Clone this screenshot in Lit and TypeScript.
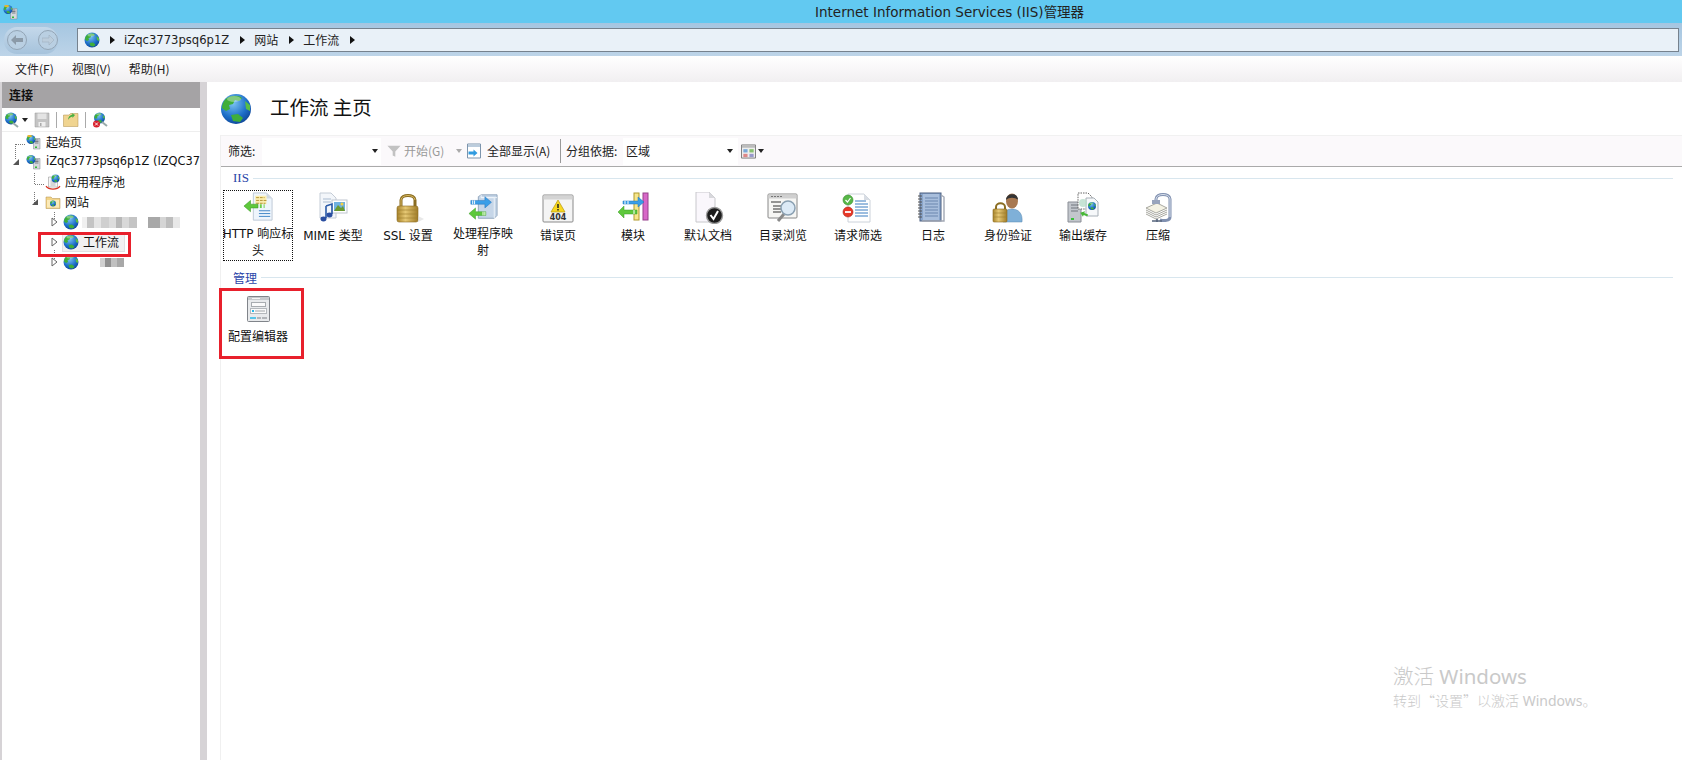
import { LitElement, html, css, svg } from "lit";
import { customElement } from "lit/decorators.js";

const globe = (cx: number, cy: number, r: number) => {
  const s = r / 15;
  return svg`<g transform="translate(${cx} ${cy}) scale(${s})">
    <circle r="15" fill="url(#gb)"/>
    <path d="M-9-11C-4-14 3-14 6-11L3-8-1-9-3-5-7-4-6 0-10 2-14-1C-14-5-12-9-9-11Z" fill="#3fae3a"/>
    <path d="M-5 6 2 5 7 9 4 13-3 12Z" fill="#3fae3a"/>
    <path d="M9-8 14-4 14 2 10 0Z" fill="#58bd45"/>
    <ellipse cx="-2" cy="-10" rx="7" ry="3" fill="#fff" opacity=".35"/>
  </g>`;
};

const S = (v: number, body: unknown) =>
  html`<svg width=${v} height=${v} viewBox="0 0 32 32">${body}</svg>`;

const srv = svg`<path d="M15 9h13v21H15z" fill="#d5d8dc" stroke="#7e848c"/><path d="M18 12h7M18 15h7M18 18h7" stroke="#59606a" stroke-width="1.5"/><rect x="18" y="25" width="4" height="3" fill="#38b838"/>`;

const big: Record<string, unknown> = {
  http: svg`<path d="M11 1h14l6 6v23H11z" fill="#eef5fc" stroke="#bcc8d4"/><path d="M25 1v6h6z" fill="#cfd8e2"/>
    <rect x="13" y="4" width="12" height="9" fill="#fbeeb0"/><path d="M14 6h9M14 9h12M14 12h10" stroke="#b09030" stroke-dasharray="3 1"/>
    <path d="M17 20h12M17 23h12M17 26h12" stroke="#3b82c4"/>
    <path d="M1 15 8 9v4h8v4H8v4z" fill="#5ec83c" stroke="#3a9a28" stroke-width=".6"/><path d="M18 13h2v4h-2zM22 13h1v4h-1z" fill="#6fce48"/>`,
  mime: svg`<path d="M3 1h11l5 5v20H3z" fill="#f3f6fa" stroke="#c4ccd6"/><path d="M6 7h8M6 10h8" stroke="#a9bbd0"/>
    <rect x="15" y="8" width="15" height="13" fill="#fff" stroke="#bfc6cf"/><rect x="17" y="10" width="11" height="9" fill="#6fb0e0"/><path d="M17 19l4-6 3 3 2-2 2 5z" fill="#6a9a30"/><circle cx="25" cy="12" r="1.5" fill="#f4d040"/>
    <path d="M9 14v12M9 14l6-2v10" stroke="#2a5aa8" stroke-width="1.6" fill="none"/><ellipse cx="6.5" cy="27" rx="3" ry="2.4" fill="#2a4ea0"/><ellipse cx="12.5" cy="23" rx="3" ry="2.4" fill="#2a4ea0"/>`,
  ssl: svg`<path d="M9 15V8C9 2 23 2 23 8v7" fill="none" stroke="#8a6d22" stroke-width="3"/><path d="M9 15V8C9 2 23 2 23 8" fill="none" stroke="#d8b860" stroke-width="1"/>
    <rect x="5" y="14" width="21" height="16" rx="2" fill="url(#gold)" stroke="#8a6a20" stroke-width=".6"/><path d="M5 18h21M5 22h21M5 26h21" stroke="#9c7c2c" opacity=".6"/><path d="M26 24l6 3-6 3z" fill="#d8d8d8" opacity=".6"/>`,
  handler: svg`<path d="M11 5l3-2h17v22l-3 3H11z" fill="#c6d6e8" stroke="#8fa4bc"/><path d="M14 3v3h17M14 6h14v22" fill="none" stroke="#eef4fa"/>
    <path d="M3 9h15V5l7 6-7 6v-4H3z" fill="#3a9ee8" stroke="#2270b8" stroke-width=".5"/><path d="M5 9v4M7 9v4" stroke="#fff"/>
    <path d="M1 23l7-6v4h11v4H8v4z" fill="#5ec83c" stroke="#3a9a28" stroke-width=".5"/><path d="M16 21v4M18 21v4" stroke="#fff"/>`,
  e404: svg`<rect x="1" y="3" width="30" height="27" rx="1" fill="#f4f4f4" stroke="#8a8a8a"/><path d="M1.5 3.5h29v4h-29z" fill="#d4d4d4"/>
    <path d="M16 8l7 12H9z" fill="#f8d820" stroke="#b89810" stroke-width=".7"/><path d="M16 12v4M16 17v1.5" stroke="#222" stroke-width="1.5"/>
    <text x="16" y="28" font-family="DejaVu Sans" font-size="8" font-weight="700" text-anchor="middle" fill="#333">404</text>`,
  module: svg`<rect x="17" y="1" width="5" height="27" fill="#f6e68c" stroke="#b09a2c"/><rect x="26" y="1" width="5" height="27" fill="#d868c8" stroke="#96408c"/>
    <path d="M6 9h15V5l6 5-6 5v-3H6z" fill="#3a9ee8" stroke="#2270b8" stroke-width=".5"/><path d="M8 9v3M11 9v3" stroke="#fff"/>
    <path d="M1 20l6-6v4h13v4H7v4z" fill="#5ec83c" stroke="#3a9a28" stroke-width=".5"/><path d="M17 18v4" stroke="#fff"/>`,
  defdoc: svg`<path d="M4 0h13l6 6v24H4z" fill="#faf7fc" stroke="#c8c8cc"/><path d="M17 0v6h6z" fill="#d8d8dc"/>
    <circle cx="22.5" cy="23.5" r="8" fill="#1c1c1c" stroke="#9a9a9a" stroke-width="1.4"/><path d="M18.5 23l3 4 4.5-8" stroke="#fff" stroke-width="2" fill="none"/>`,
  dir: svg`<rect x="1" y="2" width="29" height="24" rx="1" fill="#f6f6f4" stroke="#888"/><path d="M1.5 2.5h28v4h-28z" fill="#d0d0d0"/><path d="M4 4.5h12" stroke="#777" stroke-dasharray="2 1"/>
    <path d="M4 10h10M6 14h8M6 17h8M6 20h8" stroke="#333"/>
    <path d="M17 22 11 29" stroke="#8a8a8a" stroke-width="3"/><circle cx="21" cy="16" r="7" fill="#dceaf6" stroke="#8aa0b2" stroke-width="1.5"/>`,
  req: svg`<path d="M6 2h16l6 6v22H6z" fill="#fff" stroke="#ccd2da"/><path d="M22 2v6h6z" fill="#d8dde4"/>
    <path d="M13 9h11M13 12h13M13 15h13M13 18h13M13 21h13M13 24h13" stroke="#3a7cc0"/>
    <circle cx="6" cy="8" r="5" fill="#58b848" stroke="#3a8a30" stroke-width=".6"/><path d="M3.5 8l2 2 3-4" stroke="#fff" fill="none" stroke-width="1.2"/>
    <circle cx="6" cy="20" r="5" fill="#e83828" stroke="#aa2418" stroke-width=".6"/><path d="M3 20h6" stroke="#fff" stroke-width="1.8"/>`,
  log: svg`<rect x="3" y="1" width="21" height="28" fill="#8aa6cc" stroke="#4a5e80"/><rect x="6" y="2" width="16" height="26" fill="#a8bedc"/><path d="M8 6h13M8 9h13M8 12h13M8 15h13M8 18h13M8 21h13M8 24h13" stroke="#6a86ae"/>
    <path d="M1 4h4M1 7h4M1 10h4M1 13h4M1 16h4M1 19h4M1 22h4M1 25h4" stroke="#555"/><path d="M24 3l3 2v24H5" fill="none" stroke="#a2a8b4" stroke-width="1.4"/>`,
  auth: svg`<path d="M11 30c-1-9 3-13 9-13s11 4 10 13z" fill="#7fb0d8" stroke="#5a88b0" stroke-width=".5"/><ellipse cx="20" cy="9" rx="6" ry="7.5" fill="#a87850"/><path d="M14 8c0-7 12-8 12 0-3-3-9-3-12 0z" fill="#333"/>
    <path d="M4 18v-3c0-5 9-5 9 0v3" fill="none" stroke="#8a6d22" stroke-width="2"/><rect x="1" y="17" width="14" height="13" rx="1" fill="url(#gold)" stroke="#8a6a20" stroke-width=".6"/><path d="M1 21h14M1 25h14" stroke="#9c7c2c" opacity=".6"/>`,
  output: svg`<path d="M1 10h13v20H1z" fill="#c2c6cc" stroke="#8a8e96"/><path d="M4 13h7M4 16h7M4 19h7" stroke="#70767e"/><rect x="4" y="26" width="3" height="2" fill="#38c038"/>
    <path d="M11 1h10l4 4v12H11z" fill="#fff" stroke="#666" stroke-dasharray="1.5 1"/><path d="M19 6h8l4 4v14H19z" fill="#f6f8fa" stroke="#a8b0b8"/>
    <circle cx="16" cy="11" r="4" fill="#b9dccb" opacity=".8"/>${globe(25, 14, 4)}<path d="M13 22l4-3v2h4v2h-4v2z" fill="#48b838" transform="rotate(20 17 22)"/>`,
  compress: svg`<path d="M4 16l11-5 10 5-11 5z" fill="#f4f2e4" stroke="#a8a8a0"/><path d="M4 18l10 5 11-5M4 20l10 5 11-5M4 22l10 5 11-5" fill="none" stroke="#a8a8a0"/>
    <path d="M14 11V7c0-6 14-6 14 0v18c0 4-6 4-10 3" fill="none" stroke="#8090b0" stroke-width="3"/><path d="M14 11V7c0-6 14-6 14 0v18" fill="none" stroke="#d8e0ec"/>
    <path d="M10 29h10M15 27v3" stroke="#56647c" stroke-width="1.6"/><rect x="10" y="8" width="8" height="4" fill="#98a4bc"/>`,
  config: svg`<rect x="5.500" y="3.500" width="22" height="25" rx="1" fill="#e8eaec" stroke="#80848a"/><path d="M6 4h21v3H6z" fill="#c6c8cc"/><path d="M10 5.500h8" stroke="#f4f4f4"/>
    <rect x="9.500" y="9.500" width="14" height="4" fill="#fafafa" stroke="#a8acb0"/><rect x="8.500" y="15.500" width="16" height="5" fill="#fafafa" stroke="#b4b8bc"/><rect x="10" y="17" width="2" height="2" fill="#28b8e8"/><path d="M13 18h10" stroke="#a0a4a8"/>
    <path d="M8 25h6" stroke="#28b8e8" stroke-width="1.5"/><path d="M15 25h4M20 25h5" stroke="#a0a4a8" stroke-width="1.5"/>`,
};

const small: Record<string, unknown> = {
  home: svg`${srv}${globe(10, 11, 9)}<path d="M3 2h8v4H3z" fill="#f0b428" opacity=".9"/>`,
  server: svg`${srv}${globe(10, 11, 9)}`,
  pool: svg`<path d="M7 6h18v20H7z" fill="#f6f6f6" stroke="#888"/><path d="M11 14h10M11 18h10M11 22h10" stroke="#777"/>${globe(21, 9, 8)}<path d="M2 24c6 8 22 8 28 0" fill="none" stroke="#d83020" stroke-width="2.500"/>`,
  sites: svg`<path d="M2 6h10l3 3h15v20H2z" fill="#f2d488" stroke="#b08e48"/><path d="M4 12h24v15H4z" fill="#fbeab8"/>${globe(16, 19, 6)}`,
  site: svg`${globe(16, 16, 15)}`,
};

const items: [string, string][] = [
  ["http", "HTTP 响应标\n头"], ["mime", "MIME 类型"], ["ssl", "SSL 设置"], ["handler", "处理程序映\n射"],
  ["e404", "错误页"], ["module", "模块"], ["defdoc", "默认文档"], ["dir", "目录浏览"], ["req", "请求筛选"],
  ["log", "日志"], ["auth", "身份验证"], ["output", "输出缓存"], ["compress", "压缩"],
];

type Row = { ind: number; exp?: "open" | "closed"; icon: string; text?: string; blur?: [number, string][]; h?: number; gap?: number; sel?: boolean };
const rows: Row[] = [
  { ind: 24, icon: "home", text: "起始页" },
  { ind: 11, exp: "open", icon: "server", text: "iZqc3773psq6p1Z (IZQC37" },
  { ind: 43, icon: "pool", text: "应用程序池" },
  { ind: 30, exp: "open", icon: "sites", text: "网站" },
  { ind: 50, exp: "closed", icon: "site", gap: 3, h: 11, blur: [[5, "#f0f0f0"], [7, "#c4c4c4"], [7, "#e4e4e4"], [8, "#cfcfcf"], [7, "#dcdcdc"], [6, "#b8b8b8"], [7, "#d8d8d8"], [8, "#c4c4c4"], [11, "#fff"], [12, "#a8a8a8"], [6, "#d5d5d5"], [7, "#bdbdbd"], [7, "#e8e8e8"]] },
  { ind: 50, exp: "closed", icon: "site", text: "工作流", sel: true },
  { ind: 50, exp: "closed", icon: "site", gap: 21, h: 9, blur: [[5, "#d0d0d0"], [6, "#909090"], [6, "#c0c0c0"], [7, "#a8a8a8"]] },
];

const drop = html`<svg class="drop" width="6" height="4" viewBox="0 0 6 4"><path d="M0 0h6L3 4z" fill="#222"/></svg>`;
const gdrop = html`<svg class="drop" width="6" height="4" viewBox="0 0 6 4"><path d="M0 0h6L3 4z" fill="#aaa"/></svg>`;
const crumb = html`<svg class="crumb" width="5" height="8" viewBox="0 0 5 8"><path d="M0 0l5 4-5 4z" fill="#111"/></svg>`;

@customElement("app-root")
export class AppRoot extends LitElement {
  static styles = css`
    :host { display: flex; flex-direction: column; width: 1682px; height: 760px; overflow: hidden; position: relative; background: #fff; color: #111;
      font: 12px "DejaVu Sans", "Noto Sans CJK SC", sans-serif; }
    .defs { width: 0; height: 0; position: absolute; }
    .cn { font-family: "Noto Sans CJK SC", sans-serif; }
    .title { height: 23px; background: #62c9f1; display: flex; align-items: center; flex: none; padding-left: 3px; }
    .title .t { margin-left: 796px; font-size: 13.5px; color: #222; white-space: nowrap; padding-bottom: 2px; }
    .addr { height: 33px; flex: none; display: flex; align-items: center; background: linear-gradient(#a5c6e1, #bdd4e8); padding-left: 4px; }
    .nav { width: 54px; height: 27px; border-radius: 13px; background: linear-gradient(#c4d8ea, #a6c3dc); display: flex; align-items: center; justify-content: space-between; padding: 0 0 0 3px; box-sizing: border-box; margin-top: 1px; }
    .nav span { width: 20px; height: 20px; border-radius: 50%; border: 1px solid #93a5b6; box-sizing: border-box; background: #b9cfe2; display: flex; align-items: center; justify-content: center; }
    .box { margin-left: 19px; flex: 1; height: 24px; background: #e9f1f8; border: 1px solid #76828e; margin-right: 3px; display: flex; align-items: center; padding-left: 6px; box-sizing: border-box; }
    .box .crumb { margin: 0 9px 0 11px; flex: none; }
    .box .crumb.first { margin-left: 10px; }
    .box b { font-weight: 400; color: #222; font-size: 11.6px; }
    .box b.cn { font-size: 12px; }
    .menu { height: 26px; flex: none; display: flex; align-items: center; background: linear-gradient(#fff, #f1eff1); gap: 18px; padding: 0 0 2px 15px; box-sizing: border-box; color: #222; font-family: "Noto Sans CJK SC", sans-serif; }
    .main { flex: 1; display: flex; background: #d6d3d6; min-height: 0; }
    .left { width: 198px; margin-left: 2px; background: #fff; flex: none; display: flex; flex-direction: column; overflow: hidden; }
    .lh { height: 26px; background: #a5a3a5; font-weight: 700; display: flex; align-items: center; padding: 0 0 2px 7px; box-sizing: border-box; flex: none; color: #111; }
    .ltb { height: 24px; flex: none; display: flex; align-items: center; padding-left: 2px; border-bottom: 1px solid #eee; box-sizing: border-box; }
    .ltb .sep { width: 1px; height: 16px; background: #aaa; margin: 0 6px; }
    .ltb .drop { margin: 0 6px 0 2px; }
    .tree { position: relative; }
    .row { height: 20px; display: flex; align-items: center; white-space: nowrap; position: relative; }
    .row .exp { width: 8px; flex: none; }
    .row .ic { flex: none; display: flex; }
    .row .tx { margin-left: 4px; color: #111; padding-bottom: 2px; font-size: 11.4px; }
    .row .tx.cn { font-size: 12px; }
    .row.sel .pill { display: flex; align-items: center; background: #f1f0f1; border: 1px solid #e2e0e2; height: 19px; padding-right: 5px; margin-left: -1px; box-sizing: border-box; }
    .mosaic { display: flex; align-items: stretch; }
    .lines { position: absolute; left: 0; top: 0; pointer-events: none; }
    .right { flex: 1; margin-left: 7px; background: #fff; display: flex; flex-direction: column; min-width: 0; }
    .hdr { height: 53px; flex: none; display: flex; align-items: center; padding-left: 13px; box-sizing: border-box; }
    .hdr h1 { margin: 0 0 0 18px; padding-bottom: 4px; font-weight: 400; font-size: 19.500px; color: #111; font-family: "Noto Sans CJK SC", sans-serif; }
    .body { flex: 1; margin-left: 13px; border-left: 1px solid #f0f0f0; display: flex; flex-direction: column; }
    .bar { height: 32px; flex: none; background: #fbf9fb; border-top: 1px solid #f1f1f1; border-bottom: 1px solid #aaa; box-sizing: border-box; display: flex; align-items: center; color: #222; }
    .bar > * { flex: none; }
    .bar .cn { padding-bottom: 1px; }
    .input { height: 27px; background: #fff; display: flex; align-items: center; justify-content: space-between; box-sizing: border-box; padding-right: 3px; }
    .grayt { color: #999; }
    .vs { width: 1px; height: 24px; background: #999; }
    .fl { width: 34px; margin-left: 7px; }
    .fi { width: 119px; justify-content: flex-end; }
    .ib { display: flex; }
    .ib6 { margin-left: 6px; }
    .ib2 { margin-left: 2px; }
    .ib4 { margin-left: 4px; }
    .ib3 { margin-left: 3px; }
    .go { margin-left: 3px; width: 52px; }
    .all { margin-left: 5px; width: 73px; }
    .grp { margin-left: 5px; width: 57px; }
    .gi { width: 115px; padding: 0 5px 0 3px; }
    .sec { display: flex; align-items: center; height: 20px; padding-right: 9px; margin-left: 12px; font-size: 12px; color: #2a45a8; gap: 4px; flex: none; }
    .sec i { flex: 1; height: 1px; background: #d8e6ee; }
    .serif { font-family: "Liberation Serif", serif; font-size: 13px; }
    .grid { display: flex; gap: 5px; padding-left: 2px; flex: none; }
    .item { width: 70px; height: 71px; box-sizing: border-box; border: 1px dotted transparent; padding-top: 1px; display: flex; flex-direction: column; align-items: center; }
    .item.focus { border-color: #111; }
    .item .lb { margin-top: 4px; line-height: 17px; white-space: pre; text-align: center; color: #111; }
    .s1 { margin-top: 1px; }
    .g1 { margin-top: 2px; }
    .s2 { margin-top: 6px; }
    .g2 { margin-top: 4px; }
    .mark { position: absolute; border: 3px solid #e8202c; box-sizing: border-box; pointer-events: none; }
    .m1 { left: 38px; top: 232px; width: 93px; height: 25px; }
    .m2 { left: 219px; top: 288px; width: 85px; height: 71px; }
    .wm { position: absolute; left: 1393px; top: 662px; color: #c9c9c9; font-family: "Noto Sans", "Noto Sans CJK SC", sans-serif; pointer-events: none; white-space: nowrap; }
    .wm .a { font-size: 20.500px; line-height: 27px; }
    .wm .b { font-size: 14px; line-height: 20px; }
    .wm .cn { font-family: "Noto Sans CJK SC", sans-serif; font-weight: 300; }
  `;

  render() {
    return html`
      <svg class="defs"><defs>
        <radialGradient id="gb" cx=".4" cy=".3" r=".8"><stop offset="0" stop-color="#7cc4f2"/><stop offset=".6" stop-color="#1c6ec8"/><stop offset="1" stop-color="#0c3c8c"/></radialGradient>
        <linearGradient id="gold" x1="0" x2="1"><stop offset="0" stop-color="#a8842c"/><stop offset=".4" stop-color="#e6c874"/><stop offset="1" stop-color="#a07c28"/></linearGradient>
      </defs></svg>
      <div class="title">
        ${S(16, small.home)}
        <span class="t">Internet Information Services (IIS)<span class="cn">管理器</span></span>
      </div>
      <div class="addr">
        <div class="nav">
          <span><svg width="12" height="10" viewBox="0 0 12 10"><path d="M5 0 0 5l5 5V7h7V3H5z" fill="#8b9aa8"/></svg></span>
          <span><svg width="12" height="10" viewBox="0 0 12 10"><path d="M7 0l5 5-5 5V7H0V3h7z" fill="#bccddc" stroke="#9fb0c0" stroke-width=".6"/></svg></span>
        </div>
        <div class="box">
          ${S(16, small.site)}
          <svg class="crumb first" width="5" height="8" viewBox="0 0 5 8"><path d="M0 0l5 4-5 4z" fill="#111"/></svg>
          <b>iZqc3773psq6p1Z</b>${crumb}<b class="cn">网站</b>${crumb}<b class="cn">工作流</b>${crumb}
        </div>
      </div>
      <div class="menu"><span>文件(F)</span><span>视图(V)</span><span>帮助(H)</span></div>
      <div class="main">
        <div class="left">
          <div class="lh cn">连接</div>
          <div class="ltb">
            ${S(16, svg`${globe(14, 13, 12)}<path d="M18 22l10 8" stroke="#9aa" stroke-width="4"/>`)}${drop}
            ${S(16, svg`<path d="M2 2h28v28H2z" fill="#c4c4c4" stroke="#999"/><path d="M7 3h18v11H7z" fill="#e4e4e4"/><path d="M9 20h14v9H9z" fill="#eee"/><path d="M12 22h3v6h-3z" fill="#aaa"/>`)}
            <span class="sep"></span>
            ${S(16, svg`<path d="M1 6h11l3-3h15v26H1z" fill="#f0d490" stroke="#b08e48"/><path d="M10 16c0-6 4-10 9-11l-2-3 7 4-5 6v-3c-4 1-7 3-9 7z" fill="#48b040"/>`)}
            <span class="sep"></span>
            ${S(16, svg`${globe(15, 12, 11)}<path d="M20 20l10 8" stroke="#9aa" stroke-width="4"/><circle cx="9" cy="24" r="7" fill="#d8202c"/><path d="M6 21l6 6M12 21l-6 6" stroke="#fff" stroke-width="1.8"/>`)}
          </div>
          <div class="tree">
            <svg class="lines" width="198" height="145"><path d="M13.500 12V27M14 12.500H24M32.500 41V52M33 52.500H43M32.500 60V71M52.500 80V88M52.500 118V128" fill="none" stroke="#777" stroke-dasharray="1 1"/></svg>
            ${rows.map(r => this.row(r))}
          </div>
        </div>
        <div class="right">
          <div class="hdr">${S(32, globe(16, 16, 15))}<h1>工作流 主页</h1></div>
          <div class="body">
            <div class="bar">
              <span class="cn fl">筛选:</span>
              <div class="input fi">${drop}</div>
              <span class="ib ib6">${S(14, svg`<path d="M1 4h30L19 17v12l-6-3v-9z" fill="#c2c2c2"/>`)}</span>
              <span class="grayt cn go">开始(G)</span>
              ${gdrop}
              <span class="ib ib4">${S(16, svg`<path d="M3 2h26v28H3z" fill="#fff" stroke="#7d95ad" stroke-width="2"/><path d="M4 3h24v5H4z" fill="#bcd"/><path d="M5 17h10v-4l8 7-8 7v-4H5z" fill="#2f9be0"/>`)}</span>
              <span class="cn all">全部显示(A)</span>
              <span class="vs"></span>
              <span class="cn grp">分组依据:</span>
              <div class="input gi"><span class="cn">区域</span>${drop}</div>
              <span class="ib ib3">${S(15, svg`<path d="M1 2h30v28H1z" fill="#eee" stroke="#777" stroke-width="2"/><path d="M2 3h28v5H2z" fill="#bbb"/><rect x="5" y="11" width="9" height="7" fill="#7aa8d8"/><rect x="18" y="11" width="9" height="7" fill="#88c070"/><rect x="5" y="21" width="9" height="7" fill="#d88"/><rect x="18" y="21" width="9" height="7" fill="#99c"/>`)}</span>
              <span class="ib ib2">${drop}</span>
            </div>
            <div class="sec s1"><span class="serif">IIS</span><i></i></div>
            <div class="grid g1">${items.map(([k, l], i) => html`
              <div class="item ${i === 0 ? "focus" : ""}">${S(32, big[k])}<div class="lb">${l}</div></div>`)}</div>
            <div class="sec s2"><span class="cn">管理</span><i></i></div>
            <div class="grid g2"><div class="item">${S(32, big.config)}<div class="lb">配置编辑器</div></div></div>
          </div>
        </div>
      </div>
      <div class="mark m1"></div>
      <div class="mark m2"></div>
      <div class="wm">
        <div class="a"><span class="cn">激活</span> Windows</div>
        <div class="b"><span class="cn">转到“设置”以激活</span> Windows<span class="cn">。</span></div>
      </div>
    `;
  }

  row(r: Row) {
    const exp = r.exp === "open"
      ? html`<svg class="exp" width="8" height="8" viewBox="0 0 8 8"><path d="M7 1v6H1z" fill="#555"/></svg>`
      : r.exp === "closed"
        ? html`<svg class="exp" width="8" height="10" viewBox="0 0 8 10"><path d="M1 1l5 4-5 4z" fill="#fff" stroke="#666"/></svg>`
        : "";
    const lead = r.exp ? r.ind - 1 : r.ind;
    const afterExp = r.exp ? (r.ind === 50 ? 4 : 6) : 0;
    const icon = html`<span class="ic">${S(16, small[r.icon])}</span>`;
    const body = r.text
      ? html`<span class="tx ${/^i/.test(r.text) ? "" : "cn"}">${r.text}</span>`
      : html`<span class="mosaic" style="margin-left:${r.gap}px;height:${r.h}px">${r.blur!.map(([w, c]) => html`<span style="width:${w}px;background:${c}"></span>`)}</span>`;
    return html`<div class="row ${r.sel ? "sel" : ""}" style="padding-left:${lead}px">
      ${exp}<span style="width:${afterExp}px;flex:none"></span>
      ${r.sel ? html`<span class="pill">${icon}${body}</span>` : html`${icon}${body}`}
    </div>`;
  }
}
